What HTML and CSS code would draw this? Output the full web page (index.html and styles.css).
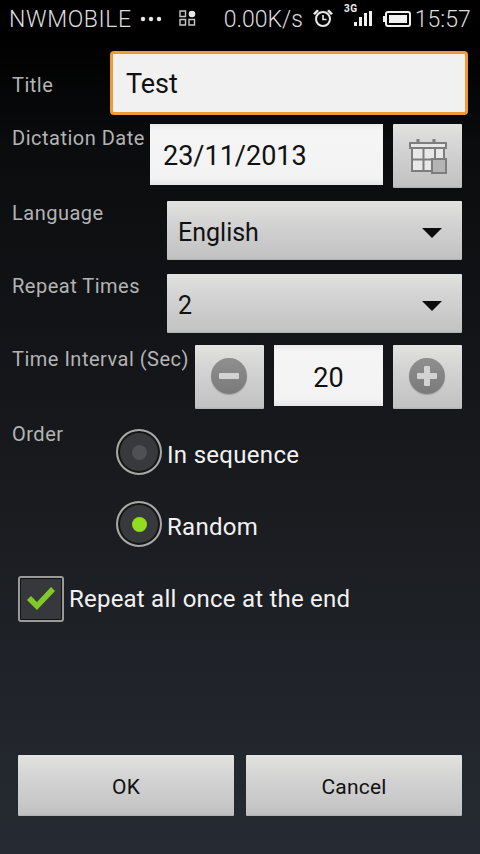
FILE: index.html
```html
<!DOCTYPE html>
<html>
  <head>
    <meta charset="utf-8" />
    <title>Dictation</title>
    <link rel="stylesheet" href="styles.css">
  </head>

  <body>
    <div class="statusbar">
      <span class="carrier">NWMOBILE</span>
      <svg class="icon-dots" width="22" height="6" viewBox="0 0 22 6"><circle cx="3" cy="3" r="2.2" /><circle cx="11" cy="3" r="2.2" /><circle cx="19" cy="3" r="2.2" /></svg>
      <svg class="icon-apps" width="17" height="16" viewBox="0 0 17 16">
        <path d="M1 1h5.500v5.500H1zM1 9.500h5.500V15H1zM10 9.500h5.500V15H10z" fill="none" stroke="#c8c8c8" stroke-width="1.400" />
        <circle cx="13" cy="4" r="3.300" fill="#e8e8e8" />
      </svg>
      <span class="speed">0.00K/s</span>
      <svg class="icon-alarm" width="22" height="20" viewBox="0 0 22 20">
        <circle cx="11" cy="11" r="7" fill="none" stroke="#e8e8e8" stroke-width="2" />
        <path d="M11 7v4.500h3.500" fill="none" stroke="#e8e8e8" stroke-width="1.600" />
        <path d="M1 5.500 5 1.500 7 3 3 7zM21 5.500 17 1.500 15 3 19 7z" fill="#e8e8e8" />
      </svg>
      <svg class="icon-signal" width="28" height="24" viewBox="0 0 28 24" fill="#f0f0f0">
        <text class="net-type" x="0" y="8.500">3G</text>
        <rect x="10" y="19" width="3" height="4" />
        <rect x="15" y="14" width="3" height="9" />
        <rect x="20" y="10" width="3" height="13" />
        <rect x="25" y="8" width="3" height="15" />
      </svg>
      <svg class="icon-battery" width="28" height="16" viewBox="0 0 28 16">
        <rect x="0" y="5" width="2" height="6" fill="#f0f0f0" />
        <rect x="3" y="1" width="24" height="14" rx="2" fill="none" stroke="#f0f0f0" stroke-width="2" />
        <rect x="6" y="4" width="18" height="8" fill="#f0f0f0" />
      </svg>
      <span class="clock">15:57</span>
    </div>

    <div class="form">
      <div class="row row-title">
        <label class="label label-title">Title</label>
        <div class="field field-focus">Test</div>
      </div>

      <div class="row row-date">
        <label class="label">Dictation Date</label>
        <div class="field field-date">23/11/2013</div>
        <div class="btn btn-square">
          <svg width="40" height="40" viewBox="0 0 40 40">
            <g fill="none" stroke="#7d7d7d" stroke-width="2">
              <path d="M10 3v5M26 3v5" stroke-width="3" />
              <path d="M4 12h32v12H26v11H4z" fill="#e8e8e8" stroke="none" />
              <rect x="2" y="7" width="36" height="5" fill="#e6e6e6" />
              <path d="M4 12v23h22M4 23.500h26M15.500 12v23M27 12v12M36 12v12" />
              <rect x="24" y="23" width="14" height="14" fill="#b4b4b4" />
            </g>
          </svg>
        </div>
      </div>

      <div class="row row-spinner">
        <label class="label">Language</label>
        <div class="btn spinner">English<span class="arrow"></span></div>
      </div>

      <div class="row row-spinner row-repeat">
        <label class="label">Repeat Times</label>
        <div class="btn spinner">2<span class="arrow"></span></div>
      </div>

      <div class="row row-interval">
        <label class="label">Time Interval (Sec)</label>
        <div class="btn btn-square btn-minus"><span class="round"><span class="bar"></span></span></div>
        <div class="field field-interval">20</div>
        <div class="btn btn-square"><span class="round"><span class="bar"></span><span class="bar bar-v"></span></span></div>
      </div>

      <div class="row row-order">
        <label class="label">Order</label>
        <div class="radios">
          <div class="radio-item"><span class="radio"><span class="dot"></span></span><span class="radio-text">In sequence</span></div>
          <div class="radio-item"><span class="radio"><span class="dot dot-on"></span></span><span class="radio-text">Random</span></div>
        </div>
      </div>

      <div class="check-item">
        <span class="check">
          <svg width="30" height="26" viewBox="0 0 30 26"><path d="M1 14 5 10 11 16 25 1 29 5 11 24z" fill="#82c92b" /></svg>
        </span>
        Repeat all once at the end
      </div>
    </div>

    <div class="footer">
      <div class="btn btn-action">OK</div>
      <div class="btn btn-action">Cancel</div>
    </div>
  </body>
</html>
```

FILE: styles.css
```css
* {
  font-family: 'Roboto', sans-serif;
  box-sizing: border-box;
}

html,
body {
  margin: 0;
  padding: 0;
  height: 854px;
  overflow: hidden;
}

body {
  display: flex;
  flex-direction: column;
  background: linear-gradient(#000 38px, #0b0c0e 150px, #1a1c20 520px, #262b33 854px);
}

.statusbar {
  height: 38px;
  flex: none;
  display: flex;
  align-items: center;
  padding-left: 9px;
  background-color: #000;
  color: #dedede;
  font-size: 23px;
  font-weight: 300;
}

.statusbar svg {
  flex: none;
}

.carrier {
  letter-spacing: 0.6px;
}

.icon-dots {
  margin-left: 8px;
  fill: #e8e8e8;
}

.icon-apps {
  margin-left: 17px;
  margin-top: -2px;
}

.speed {
  margin-left: 28px;
}

.icon-alarm {
  margin-left: 9px;
  margin-top: -3px;
}

.icon-signal {
  margin-left: 10px;
  margin-top: -9px;
}

.net-type {
  font-size: 10px;
  font-weight: 700;
  letter-spacing: 0.5px;
}

.icon-battery {
  margin-left: 11px;
}

.clock {
  margin-left: 4px;
}

.form {
  padding-left: 12px;
  padding-right: 18px;
}

.row {
  display: flex;
  align-items: flex-start;
}

.label {
  color: #b4b4b4;
  font-size: 20px;
  line-height: 28px;
  letter-spacing: 0.5px;
  white-space: nowrap;
}

.row-title {
  margin-top: 13px;
  margin-right: -6px;
  height: 64px;
}

.label-title {
  width: 98px;
  flex: none;
  margin-top: 20px;
}

.field {
  background: linear-gradient(#e9e9e9, #f5f5f5 12%, #f3f3f3 88%, #e6e6e6);
  color: #111;
  font-size: 27px;
  padding-top: 2px;
  display: flex;
  align-items: center;
}

.field-focus {
  flex: 1;
  height: 64px;
  padding-left: 13px;
  border: 3px solid #ee9a36;
  border-radius: 4px;
  background: #f1f1f1;
}

.row-date {
  margin-top: 9px;
  height: 64px;
}

.row-date .label {
  width: 138px;
  flex: none;
}

.field-date {
  width: 233px;
  height: 61px;
  padding-left: 13px;
}

.btn {
  background: linear-gradient(#e2e2e0, #d4d4d4 35%, #c2c2c2 97%, #adadad);
  color: #111;
  border-radius: 1px;
  display: flex;
  align-items: center;
}

.btn-square {
  width: 69px;
  height: 64px;
  flex: none;
  margin-left: 10px;
  justify-content: center;
}

.row-spinner {
  margin-top: 13px;
  height: 59px;
}

.row-repeat {
  margin-top: 14px;
}

.row-spinner .label {
  width: 155px;
  flex: none;
  margin-top: -2px;
}

.spinner {
  flex: 1;
  height: 59px;
  padding-left: 11px;
  padding-right: 20px;
  padding-top: 4px;
  font-size: 25px;
  justify-content: space-between;
}

.arrow {
  width: 0;
  height: 0;
  border-left: 10px solid transparent;
  border-right: 10px solid transparent;
  border-top: 10px solid #0c0c0c;
}

.row-interval {
  margin-top: 12px;
  height: 64px;
}

.row-interval .label {
  width: 183px;
  flex: none;
}

.btn-minus {
  margin-left: 0;
}

.field-interval {
  width: 109px;
  height: 61px;
  margin-left: 10px;
  padding-top: 4px;
  justify-content: center;
}

.round {
  position: relative;
  width: 36px;
  height: 36px;
  margin-right: 2px;
  margin-bottom: 2px;
  border-radius: 50%;
  background: linear-gradient(#8f8f8f, #7a7a7a);
  box-shadow: 0 1px 1px #a0a0a0;
}

.bar {
  position: absolute;
  left: 8px;
  top: 15px;
  width: 20px;
  height: 6px;
  border-radius: 1px;
  background-color: #d2d2d2;
}

.bar-v {
  left: 15px;
  top: 8px;
  width: 6px;
  height: 20px;
}

.row-order {
  margin-top: 20px;
}

.row-order .label {
  width: 104px;
  flex: none;
  margin-top: -9px;
  padding-top: 0;
}

.radios {
  display: flex;
  flex-direction: column;
  gap: 26px;
}

.radio-item,
.check-item {
  display: flex;
  align-items: center;
  color: #f2f2f2;
  font-size: 24px;
  letter-spacing: 0.3px;
}

.radio-text {
  margin-top: 5px;
}

.radio {
  width: 46px;
  height: 46px;
  margin-right: 5px;
  border: 2px solid #a8a8a8;
  border-radius: 50%;
  background-color: #38393c;
  box-shadow: inset 0 0 0 2px #151515;
  display: flex;
  align-items: center;
  justify-content: center;
}

.dot {
  width: 15px;
  height: 15px;
  border-radius: 50%;
  background-color: #4f5053;
}

.dot-on {
  background-color: #94dc20;
}

.check-item {
  margin-top: 29px;
  margin-left: 6px;
  letter-spacing: 0.22px;
}

.check {
  width: 46px;
  height: 46px;
  margin-right: 5px;
  border: 2px solid #9a9a9a;
  border-radius: 3px;
  background-color: #36383b;
  box-shadow: inset 0 0 0 1px #111;
  display: flex;
  align-items: center;
  justify-content: center;
}

.footer {
  margin-top: auto;
  margin-bottom: 38px;
  padding: 0 18px;
  display: flex;
  gap: 12px;
}

.btn-action {
  flex: 1;
  height: 61px;
  padding-top: 2px;
  justify-content: center;
  font-size: 21px;
  letter-spacing: 0.2px;
}
```
